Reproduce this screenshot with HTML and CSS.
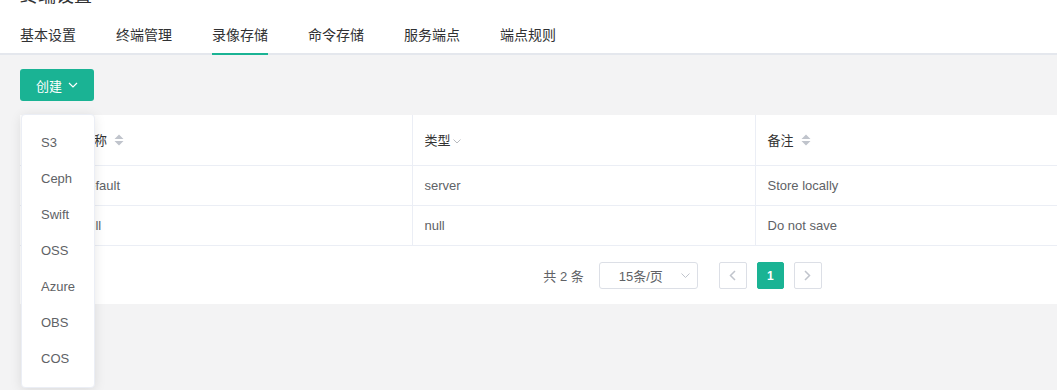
FILE: index.html
```html
<!DOCTYPE html>
<html lang="zh">
<head>
<meta charset="utf-8">
<title>终端设置</title>
<link rel="stylesheet" href="styles.css">
</head>
<body>
<header class="header">
  <div class="title"><span>终端设置</span></div>
  <nav class="tabs">
    <div class="tab">基本设置</div>
    <div class="tab">终端管理</div>
    <div class="tab active">录像存储</div>
    <div class="tab">命令存储</div>
    <div class="tab">服务端点</div>
    <div class="tab">端点规则</div>
  </nav>
</header>
<main class="main">
  <div class="toolbar">
    <div class="dropdown">
      <button class="btn-create">创建
        <svg class="chev" width="10" height="6" viewBox="0 0 10 6"><path d="M1 1l4 4 4-4" fill="none" stroke="#fff" stroke-width="1.2"/></svg>
      </button>
      <ul class="menu">
        <li>S3</li>
        <li>Ceph</li>
        <li>Swift</li>
        <li>OSS</li>
        <li>Azure</li>
        <li>OBS</li>
        <li>COS</li>
      </ul>
    </div>
  </div>
  <section class="card">
    <table class="table">
      <colgroup><col class="c1"><col class="c2"><col class="c3"></colgroup>
      <thead>
        <tr>
          <th class="first"><span class="hcell">名称<svg class="sort" width="10" height="12" viewBox="0 0 10 12"><path d="M5 0.5L9.5 5H0.5z M5 11.5L9.5 7H0.5z" fill="#c0c4cc"/></svg></span></th>
          <th><span class="hcell">类型<svg class="filter" width="8" height="5" viewBox="0 0 8 5"><path d="M0.5 0.5L4 4l3.5-3.5" fill="none" stroke="#b0b3b8" stroke-width="0.9"/></svg></span></th>
          <th><span class="hcell">备注<svg class="sort" width="10" height="12" viewBox="0 0 10 12"><path d="M5 0.5L9.5 5H0.5z M5 11.5L9.5 7H0.5z" fill="#c0c4cc"/></svg></span></th>
        </tr>
      </thead>
      <tbody>
        <tr><td class="first">default</td><td>server</td><td>Store locally</td></tr>
        <tr><td class="first">null</td><td>null</td><td>Do not save</td></tr>
      </tbody>
    </table>
    <div class="pager">
      <span class="total">共 2 条</span>
      <div class="size-select">15条/页
        <svg width="9" height="5" viewBox="0 0 9 5"><path d="M0.5 0.5L4.5 4.5 8.5 0.5" fill="none" stroke="#c0c4cc" stroke-width="1"/></svg>
      </div>
      <div class="pbtn"><svg width="7" height="11" viewBox="0 0 7 11"><path d="M6 1L1.5 5.5 6 10" fill="none" stroke="#c0c4cc" stroke-width="1.5"/></svg></div>
      <div class="pnum">1</div>
      <div class="pbtn"><svg width="7" height="11" viewBox="0 0 7 11"><path d="M1 1l4.5 4.5L1 10" fill="none" stroke="#c0c4cc" stroke-width="1.5"/></svg></div>
    </div>
  </section>
</main>
</body>
</html>
```

FILE: styles.css
```css
* { box-sizing: border-box; }
html, body { margin: 0; padding: 0; }
body {
  background: #f3f3f4;
  font-family: "Liberation Sans", "Noto Sans CJK SC", sans-serif;
  color: #606266;
  overflow: hidden;
  width: 1057px;
  height: 390px;
}
.header {
  background: #fff;
  padding: 0 20px;
}
.title {
  display: flex;
  align-items: flex-end;
  height: 15px;
  font-size: 18px;
  line-height: 18px;
  color: #303133;
}
.title span { display: block; flex: none; margin-bottom: 10px; }
.tabs {
  display: flex;
  gap: 40px;
  height: 40px;
  box-shadow: inset 0 -2px 0 #e4e7ed;
  margin: 0 -20px;
  padding: 0 20px;
}
.tab {
  position: relative;
  height: 40px;
  line-height: 40px;
  font-size: 14px;
  color: #303133;
}
.tab.active::after {
  content: "";
  position: absolute;
  left: 0; right: 0; bottom: 0;
  height: 2px;
  background: #1ab394;
}
.main { padding: 14px 20px 0; }
.toolbar { display: flex; }
.dropdown { position: relative; }
.btn-create {
  display: flex;
  align-items: center;
  gap: 6px;
  height: 32px;
  padding: 0 16px;
  border: none;
  border-radius: 3px;
  background: #1ab394;
  color: #fff;
  font-family: inherit;
  font-size: 13px;
}
.menu {
  position: absolute;
  z-index: 10;
  top: 45px;
  left: 1px;
  width: 74px;
  margin: 0;
  padding: 10px 0;
  list-style: none;
  background: #fff;
  border: 1px solid #ebeef5;
  border-radius: 4px;
  box-shadow: 0 2px 12px rgba(0,0,0,0.1);
}
.menu li {
  height: 36px;
  line-height: 36px;
  padding-left: 19px;
  font-size: 13px;
  color: #606266;
}
.card {
  margin-top: 14px;
  width: 1325px;
  background: #fff;
}
.table {
  width: 100%;
  border-collapse: collapse;
  table-layout: fixed;
  font-size: 13px;
}
.c1 { width: 392px; }
.c2 { width: 343px; }
th, td {
  text-align: left;
  padding: 0 12px;
  border-bottom: 1px solid #ebeef5;
  border-left: 1px solid #ebeef5;
}
th.first, td.first { border-left: none; padding-left: 61px; }
th {
  height: 50px;
  font-weight: normal;
  color: #333;
}
td { height: 40px; color: #606266; }
.hcell { display: inline-flex; align-items: center; }
.sort { margin-left: 7px; }
.filter { margin-left: 2px; margin-top: 3px; }
.pager {
  display: flex;
  align-items: center;
  justify-content: center;
  height: 58px;
  font-size: 13px;
  padding-top: 2px;
}
.total { margin-right: 15px; color: #606266; }
.size-select {
  display: flex;
  align-items: center;
  justify-content: space-between;
  width: 99px;
  height: 27px;
  padding: 0 7px 0 19px;
  border: 1px solid #dcdfe6;
  border-radius: 3px;
  color: #606266;
  margin-right: 21px;
}
.pbtn, .pnum {
  display: flex;
  align-items: center;
  justify-content: center;
  width: 28px;
  height: 27px;
  border: 1px solid #dcdfe6;
  border-radius: 2px;
}
.pnum {
  width: 27px;
  margin: 0 10px;
  background: #1ab394;
  border-color: #1ab394;
  color: #fff;
  font-weight: bold;
  font-size: 12px;
}
```
